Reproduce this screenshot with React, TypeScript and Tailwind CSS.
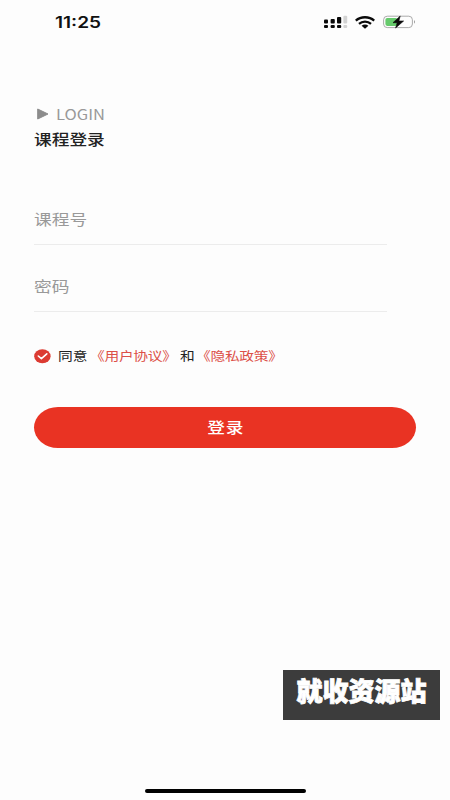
import React from "react";

type TextProps = { children: React.ReactNode; className?: string };

function WideText({ children, className = "" }: TextProps) {
  return (
    <span className={`block shrink-0 origin-left scale-x-[1.18] whitespace-nowrap ${className}`}>
      {children}
    </span>
  );
}

function SignalIcon() {
  return (
    <svg width="24" height="14" viewBox="0 0 24 14" className="shrink-0">
      <g fill="#0a0a0a">
        <rect x="0" y="4.6" width="4" height="3.8" rx="1" />
        <rect x="6.6" y="4" width="4.2" height="4.4" rx="1" />
        <rect x="13" y="2" width="4.2" height="6.4" rx="1" />
        <rect x="0" y="10" width="4" height="3" rx="1" />
        <rect x="6.6" y="10" width="4.2" height="3" rx="1" />
        <rect x="13" y="10" width="4.2" height="3" rx="1" />
      </g>
      <rect x="19.4" y="0.8" width="3.8" height="7.6" rx="1" fill="#d3d3d3" />
      <rect x="19.4" y="10" width="3.8" height="3" rx="1" fill="#d3d3d3" />
    </svg>
  );
}

function WifiIcon() {
  return (
    <svg width="20" height="13" viewBox="0 0 20 13" className="shrink-0">
      <g fill="none" stroke="#0a0a0a" strokeWidth="2.3">
        <path d="M0.8 4.6 C5.8 0.1 14.2 0.1 19.2 4.6" />
        <path d="M4 7.8 C7.4 4.8 12.6 4.8 16 7.8" />
      </g>
      <path d="M6.6 9.8 C8.5 8.2 11.5 8.2 13.4 9.8 L10 12.8 Z" fill="#0a0a0a" />
    </svg>
  );
}

function BatteryIcon() {
  return (
    <svg width="34" height="14" viewBox="0 0 34 14" className="shrink-0">
      <rect x="0.6" y="1.2" width="28.8" height="11.4" rx="3.6" fill="#fdfdfd" stroke="#aaaaaa" strokeWidth="1" />
      <rect x="2.4" y="2.9" width="12" height="8" rx="1.8" fill="#66ca6c" />
      <path d="M31 5 Q33 6.9 31 8.8 Z" fill="#999999" />
      <path d="M17.2 1 L10 7.7 H14.2 L12.6 13 L20.6 6 H15.9 Z" fill="#0a0a0a" stroke="#0a0a0a" strokeWidth="0.6" strokeLinejoin="round" />
    </svg>
  );
}

function Field({ label }: { label: string }) {
  return (
    <div className="h-[67.5px] w-[353px] border-b border-[#ececec] pt-[30.5px]">
      <WideText className="text-[15px] leading-[22px] text-[#999999]">{label}</WideText>
    </div>
  );
}

export default function App() {
  return (
    <main className="relative flex h-[800px] w-[450px] flex-col overflow-hidden bg-[#fdfdfd] font-['Noto_Sans_CJK_SC',sans-serif]">
      <header className="flex h-[44px] shrink-0 items-center justify-between pr-[33px] pl-[55px]">
        <span className="block origin-left scale-x-[1.23] pt-px font-['Inter',sans-serif] text-[15.5px] leading-5 font-semibold text-[#111111]">
          11:25
        </span>
        <div className="flex items-center">
          <SignalIcon />
          <span className="w-[7px]" />
          <WifiIcon />
          <span className="w-[8px]" />
          <BatteryIcon />
        </div>
      </header>

      <section className="flex flex-col pr-[34px] pl-[34px] pt-[60px]">
        <div className="flex h-[20px] items-center">
          <svg width="12" height="12" viewBox="0 0 12 12" className="ml-[3px]">
            <path d="M0.7 1 L11 6 L0.7 11 Z" fill="#8c8c8c" stroke="#8c8c8c" strokeLinejoin="round" />
          </svg>
          <WideText className="ml-[7px] text-[14px] leading-5 text-[#999999]">LOGIN</WideText>
        </div>
        <h1 className="mt-[4px]">
          <WideText className="text-[15px] leading-[22px] font-medium text-[#222222]">课程登录</WideText>
        </h1>

        <div className="mt-[27px] flex flex-col">
          <Field label="课程号" />
          <Field label="密码" />
        </div>

        <div className="mt-[34.5px] flex h-[20px] items-center">
          <svg width="17" height="15" viewBox="0 0 17 15" className="shrink-0">
            <ellipse cx="8.4" cy="7.2" rx="8.2" ry="7" fill="#dc3b32" />
            <path d="M4.3 7 L7.4 9.7 L12.8 4.8" fill="none" stroke="#ffffff" strokeWidth="1.6" strokeLinecap="round" strokeLinejoin="round" />
          </svg>
          <div className="flex items-center pb-px">
            <WideText className="ml-[7px] text-[12.5px] leading-5 text-[#222222]">同意</WideText>
            <WideText className="ml-[6.5px] text-[12.5px] leading-5 tracking-[-0.25px] text-[#dc5048]">《用户协议》</WideText>
            <WideText className="ml-[16.5px] text-[12.5px] leading-5 text-[#222222]">和</WideText>
            <WideText className="ml-[4px] text-[12.5px] leading-5 tracking-[-0.25px] text-[#dc5048]">《隐私政策》</WideText>
          </div>
        </div>

        <button className="mt-[40.5px] flex h-[41px] w-[382px] items-center justify-center rounded-[24px/20.5px] bg-[#e93323] pb-[2px]">
          <span className="block scale-x-[1.18] pl-px text-[15px] leading-[22px] font-medium tracking-[0.7px] text-white">登录</span>
        </button>
      </section>

      <div className="absolute top-[670px] left-[283px] flex h-[50px] w-[157px] justify-center bg-[#3c3c3c] pt-[2px] text-[26px] leading-[36px] font-black whitespace-nowrap text-white [-webkit-text-stroke:0.8px_white]">
        就收资源站
      </div>

      <div className="mt-auto mb-[7px] ml-[145px] h-[4px] w-[161px] rounded-full bg-black" />
    </main>
  );
}
